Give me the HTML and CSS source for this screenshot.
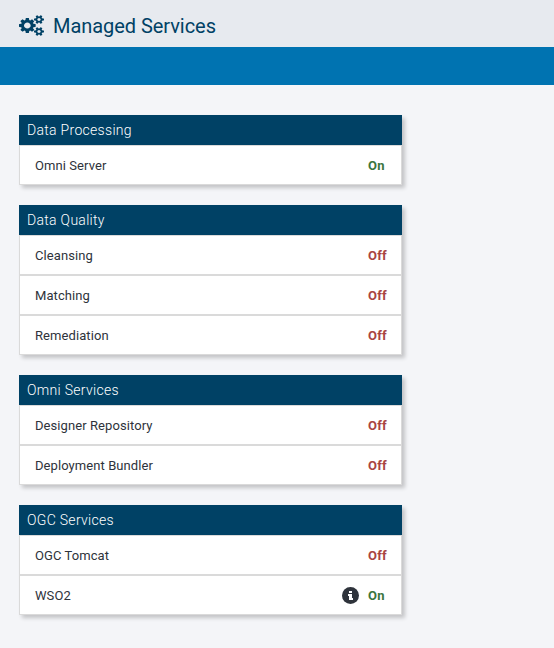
FILE: index.html
```html
<!DOCTYPE html>
<html lang="en">
<head>
<meta charset="utf-8">
<title>Managed Services</title>
<link rel="stylesheet" href="styles.css">
</head>
<body>
<header class="page-header">
  <svg class="gears" viewBox="0 0 1920 1792" preserveAspectRatio="none" aria-hidden="true"><path d="M896 896q0-106-75-181t-181-75-181 75-75 181 75 181 181 75 181-75 75-181zm768 512q0-52-38-90t-90-38-90 38-38 90q0 53 37.500 90.500t90.500 37.500 90.500-37.500 37.500-90.500zm0-1024q0-52-38-90t-90-38-90 38-38 90q0 53 37.500 90.500t90.500 37.500 90.500-37.500 37.500-90.500zm-384 421v185q0 10-7 19.500t-16 10.500l-155 24q-11 35-32 76 34 48 90 115 7 11 7 20 0 12-7 19-23 30-82.500 89.500t-78.500 59.500q-11 0-21-7l-115-90q-37 19-77 31-11 108-23 155-7 24-30 24h-186q-11 0-20-7.500t-10-17.500l-23-153q-34-10-75-31l-118 89q-7 7-20 7-11 0-21-8-144-133-144-160 0-9 7-19 10-14 41-53t47-61q-23-44-35-82l-152-24q-10-1-17-9.500t-7-19.500v-185q0-10 7-19.500t16-10.500l155-24q11-35 32-76-34-48-90-115-7-11-7-20 0-12 7-20 22-30 82-89t79-59q11 0 21 7l115 90q34-18 77-32 11-108 23-154 7-24 30-24h186q11 0 20 7.500t10 17.500l23 153q34 10 75 31l118-89q8-7 20-7 11 0 21 8 144 133 144 160 0 8-7 19-12 16-42 54t-45 60q23 48 34 82l152 23q10 2 17 10.500t7 19.500zm640 533v140q0 16-149 31-12 27-30 52 51 113 51 138 0 4-4 7-122 71-124 71-8 0-46-47t-52-68q-20 2-30 2t-30-2q-14 21-52 68t-46 47q-2 0-124-71-4-3-4-7 0-25 51-138-18-25-30-52-149-15-149-31v-140q0-16 149-31 13-29 30-52-51-113-51-138 0-4 4-7 4-2 35-20t59-34 30-16q8 0 46 46.500t52 67.500q20-2 30-2t30 2q51-71 92-112l6-2q4 0 124 70 4 3 4 7 0 25-51 138 17 23 30 52 149 15 149 31zm0-1024v140q0 16-149 31-12 27-30 52 51 113 51 138 0 4-4 7-122 71-124 71-8 0-46-47t-52-68q-20 2-30 2t-30-2q-14 21-52 68t-46 47q-2 0-124-71-4-3-4-7 0-25 51-138-18-25-30-52-149-15-149-31v-140q0-16 149-31 13-29 30-52-51-113-51-138 0-4 4-7 4-2 35-20t59-34 30-16q8 0 46 46.500t52 67.500q20-2 30-2t30 2q51-71 92-112l6-2q4 0 124 70 4 3 4 7 0 25-51 138 17 23 30 52 149 15 149 31z"/></svg>
  <h1>Managed Services</h1>
</header>
<div class="toolbar"></div>
<main>
  <section class="group">
    <h2>Data Processing</h2>
    <div class="row"><span>Omni Server</span><b class="status on">On</b></div>
  </section>
  <section class="group">
    <h2>Data Quality</h2>
    <div class="row"><span>Cleansing</span><b class="status off">Off</b></div>
    <div class="row"><span>Matching</span><b class="status off">Off</b></div>
    <div class="row"><span>Remediation</span><b class="status off">Off</b></div>
  </section>
  <section class="group">
    <h2>Omni Services</h2>
    <div class="row"><span>Designer Repository</span><b class="status off">Off</b></div>
    <div class="row"><span>Deployment Bundler</span><b class="status off">Off</b></div>
  </section>
  <section class="group">
    <h2>OGC Services</h2>
    <div class="row"><span>OGC Tomcat</span><b class="status off">Off</b></div>
    <div class="row"><span>WSO2</span>
      <svg class="info" viewBox="0 0 17 17" aria-hidden="true"><circle cx="8.500" cy="8.500" r="8.500"/><path d="M7 4h3v2H7zM7 7h3v4h1v2H7v-4H6V7z"/></svg>
      <b class="status on">On</b></div>
  </section>
</main>
</body>
</html>
```
FILE: styles.css
```css
* { box-sizing: border-box; }
body {
  margin: 0;
  min-height: 648px;
  background: #f4f5f8;
  color: #2e333b;
  font: 13px/16px Roboto, "Liberation Sans", sans-serif;
}
.page-header {
  display: flex;
  align-items: center;
  height: 47px;
  padding: 4px 19px 0;
  background: #e7eaef;
  color: #004165;
}
.gears { width: 25px; height: 21px; margin-top: -1px; fill: currentColor; }
h1 { margin: 0 0 0 9px; font-size: 20px; line-height: 24px; font-weight: 400; letter-spacing: -.05px; }
.toolbar { height: 38px; background: #0073b1; }
main {
  display: flex;
  flex-direction: column;
  gap: 20px;
  width: 402px;
  padding: 30px 0 33px 19px;
}
.group { box-shadow: 3px 3px 4px rgba(0, 0, 0, .2); }
h2 {
  margin: 0;
  height: 30px;
  padding: 0 8px;
  background: #004165;
  color: #fff;
  font-size: 14px;
  line-height: 30px;
  font-weight: 300;
  letter-spacing: .3px;
}
.row {
  display: flex;
  align-items: center;
  height: 40px;
  padding: 2px 14px 0 15px;
  border: 1px solid #dadada;
  background: #fff;
  letter-spacing: .08px;
}
.row > span { flex: 1; }
.status { width: 19px; font-weight: 700; letter-spacing: .25px; }
.on { color: #3c763d; }
.off { color: #a94442; }
.info { width: 17px; height: 17px; margin: -2px 9px 0 0; fill: #2e333b; }
.info path { fill: #fff; }
```
